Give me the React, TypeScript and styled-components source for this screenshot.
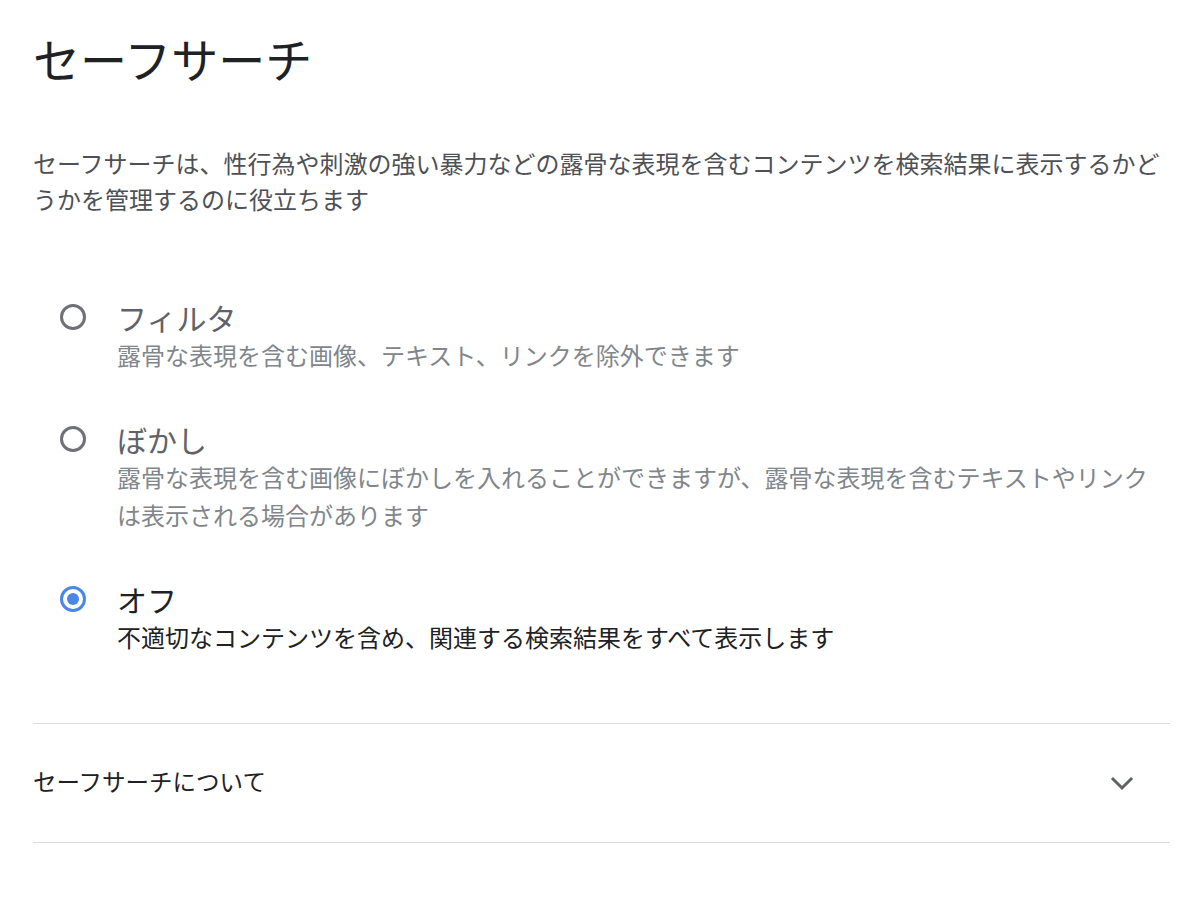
import React, { useState } from "react";
import styled, { createGlobalStyle } from "styled-components";

const GlobalStyle = createGlobalStyle`
  body {
    margin: 0;
    background: #ffffff;
    font-family: "Noto Sans CJK JP", "Noto Sans", sans-serif;
  }
`;

type Option = {
  id: string;
  label: string;
  description: string;
};

const options: Option[] = [
  {
    id: "filter",
    label: "フィルタ",
    description: "露骨な表現を含む画像、テキスト、リンクを除外できます",
  },
  {
    id: "blur",
    label: "ぼかし",
    description:
      "露骨な表現を含む画像にぼかしを入れることができますが、露骨な表現を含むテキストやリンクは表示される場合があります",
  },
  {
    id: "off",
    label: "オフ",
    description: "不適切なコンテンツを含め、関連する検索結果をすべて表示します",
  },
];

const App: React.FC = (): JSX.Element => {
  const [selected, setSelected] = useState<string>("off");

  return (
    <Page>
      <GlobalStyle />
      <Title>セーフサーチ</Title>
      <Intro>
        セーフサーチは、性行為や刺激の強い暴力などの露骨な表現を含むコンテンツを検索結果に表示するかどうかを管理するのに役立ちます
      </Intro>
      <OptionList>
        {options.map((opt) => {
          const isOn = selected === opt.id;
          return (
            <OptionRow key={opt.id} onClick={() => setSelected(opt.id)}>
              <Radio $selected={isOn} />
              <OptionText>
                <OptionLabel $selected={isOn}>{opt.label}</OptionLabel>
                <OptionDesc $selected={isOn}>{opt.description}</OptionDesc>
              </OptionText>
            </OptionRow>
          );
        })}
      </OptionList>
      <Accordion>
        <AccordionLabel>セーフサーチについて</AccordionLabel>
        <svg width="24" height="24" viewBox="0 0 24 24" fill="none">
          <path
            d="M3 8 L12 17 L21 8"
            stroke="#5f6368"
            strokeWidth="3"
            strokeLinecap="square"
          />
        </svg>
      </Accordion>
    </Page>
  );
};

export default App;

const Page = styled.div`
  padding: 30px 30px 40px 33px;
  display: flex;
  flex-direction: column;
`;

const Title = styled.h1`
  margin: 0;
  font-size: 47px;
  line-height: 56px;
  font-weight: 400;
  color: #202124;
`;

const Intro = styled.p`
  margin: 59px 0 0 0;
  font-size: 24px;
  line-height: 36px;
  color: #4d5156;
`;

const OptionList = styled.div`
  margin-top: 81px;
  display: flex;
  flex-direction: column;
  row-gap: 46px;
  padding-left: 27px;
`;

const OptionRow = styled.div`
  display: flex;
  align-items: flex-start;
  column-gap: 31px;
  cursor: pointer;
`;

const Radio = styled.span<{ $selected: boolean }>`
  flex: none;
  box-sizing: border-box;
  width: 26px;
  height: 26px;
  margin-top: 6px;
  border-radius: 50%;
  border: 3px solid ${(p) => (p.$selected ? "#4a86e8" : "#6f7176")};
  display: flex;
  align-items: center;
  justify-content: center;

  &::after {
    content: "";
    width: 12px;
    height: 12px;
    border-radius: 50%;
    background: ${(p) => (p.$selected ? "#4a86e8" : "transparent")};
  }
`;

const OptionText = styled.div`
  display: flex;
  flex-direction: column;
`;

const OptionLabel = styled.div<{ $selected: boolean }>`
  font-size: 30px;
  line-height: 38px;
  color: ${(p) => (p.$selected ? "#202124" : "#5f6368")};
`;

const OptionDesc = styled.div<{ $selected: boolean }>`
  font-size: 24px;
  line-height: 38px;
  color: ${(p) => (p.$selected ? "#202124" : "#80868b")};
`;

const Accordion = styled.div`
  margin-top: 67px;
  height: 118px;
  border-top: 1px solid #dadce0;
  border-bottom: 1px solid #dadce0;
  display: flex;
  align-items: center;
  justify-content: space-between;
  padding-right: 36px;
`;

const AccordionLabel = styled.span`
  font-size: 23.5px;
  padding-bottom: 5px;
  color: #202124;
`;
